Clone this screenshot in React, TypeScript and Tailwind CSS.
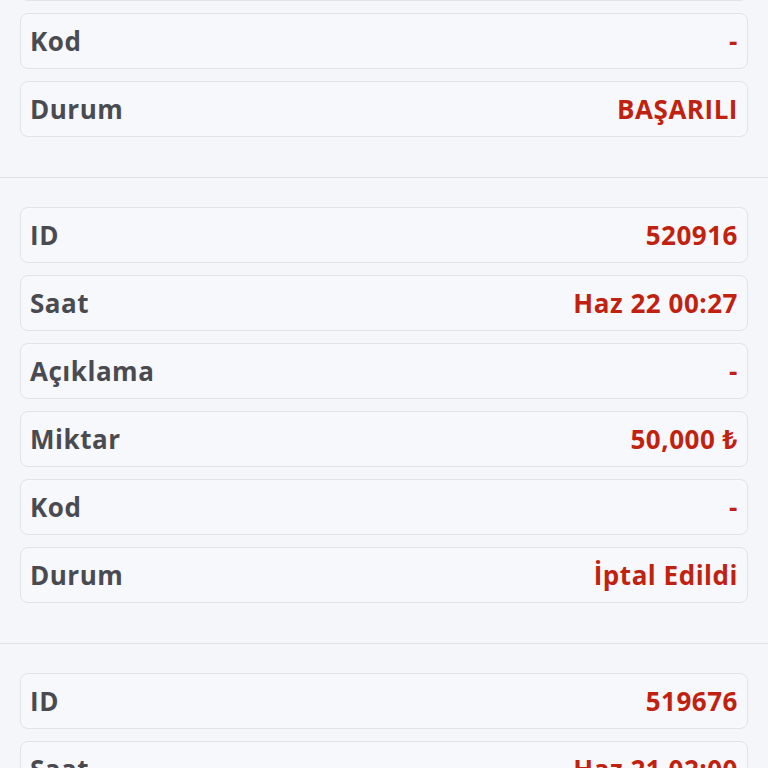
const sections: Array<Array<[string, string]>> = [
  [
    ["Miktar", "50,000 ₺"],
    ["Kod", "-"],
    ["Durum", "BAŞARILI"],
  ],
  [
    ["ID", "520916"],
    ["Saat", "Haz 22 00:27"],
    ["Açıklama", "-"],
    ["Miktar", "50,000 ₺"],
    ["Kod", "-"],
    ["Durum", "İptal Edildi"],
  ],
  [
    ["ID", "519676"],
    ["Saat", "Haz 21 02:00"],
    ["Açıklama", "-"],
    ["Miktar", "50,000 ₺"],
    ["Kod", "-"],
    ["Durum", "BAŞARILI"],
  ],
];

function Row({ label, value }: { label: string; value: string }) {
  return (
    <div className="mx-5 flex h-14 items-center justify-between rounded-lg border border-[#e2e3e8] bg-[#f7f8fc] px-[9px]">
      <span className="text-[26px] font-bold tracking-[0.02em] text-[#4a4b51]">{label}</span>
      <span className="text-[26px] font-bold tracking-[0.02em] text-[#c1220f]">{value}</span>
    </div>
  );
}

export default function App() {
  return (
    <div
      className="h-screen overflow-hidden bg-[#f5f6fa]"
      style={{ fontFamily: '"Open Sans", "Noto Sans", sans-serif' }}
    >
      <div className="-mt-[55px]">
        {sections.map((rows, i) => (
          <section
            key={i}
            className={`flex flex-col gap-3 border-b border-[#e0e1e6] pb-10 ${i === 0 ? "pt-0" : "pt-[29px]"}`}
          >
            {rows.map(([label, value]) => (
              <Row key={label} label={label} value={value} />
            ))}
          </section>
        ))}
      </div>
    </div>
  );
}
